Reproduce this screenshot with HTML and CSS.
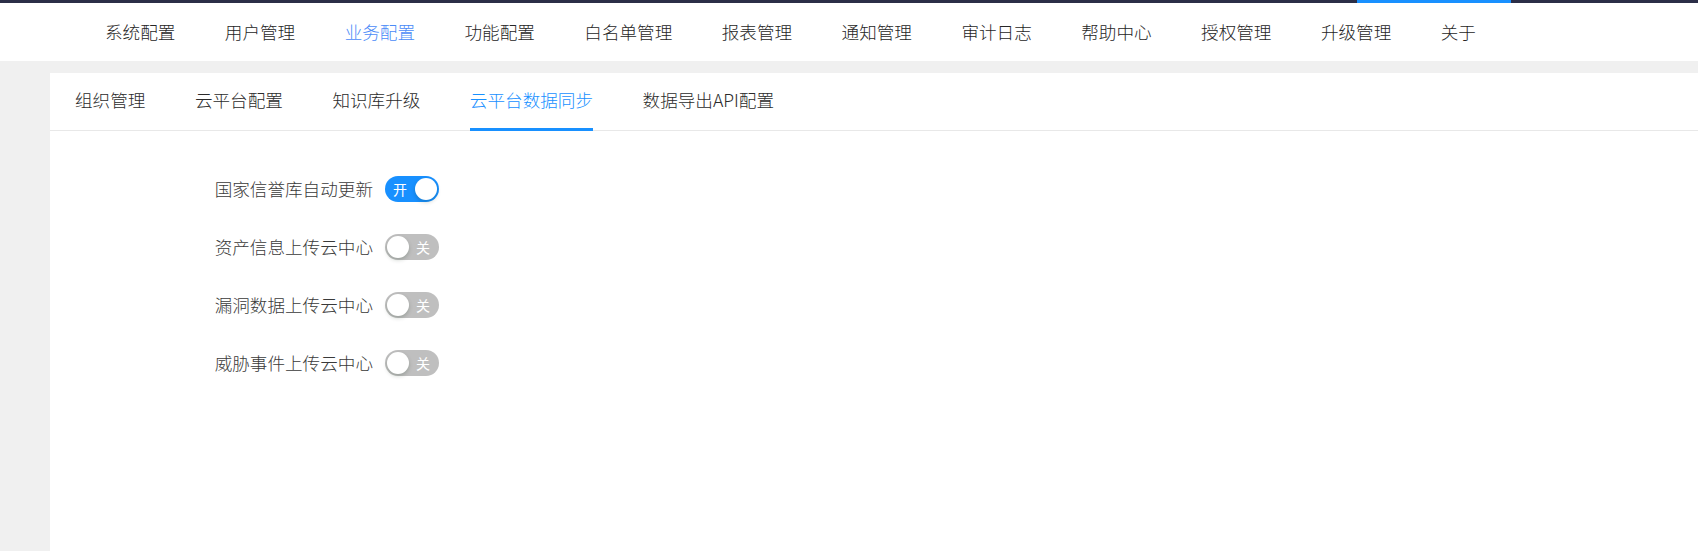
FILE: index.html
```html
<!DOCTYPE html>
<html lang="zh-CN">
<head>
<meta charset="utf-8">
<title>业务配置</title>
<link rel="stylesheet" href="styles.css">
</head>
<body>
<header class="topbar">
  <div class="topline"><span class="topline-active"></span></div>
  <nav class="mainnav">
    <a class="nav-item">系统配置</a>
    <a class="nav-item">用户管理</a>
    <a class="nav-item active">业务配置</a>
    <a class="nav-item">功能配置</a>
    <a class="nav-item">白名单管理</a>
    <a class="nav-item">报表管理</a>
    <a class="nav-item">通知管理</a>
    <a class="nav-item">审计日志</a>
    <a class="nav-item">帮助中心</a>
    <a class="nav-item">授权管理</a>
    <a class="nav-item">升级管理</a>
    <a class="nav-item">关于</a>
  </nav>
</header>
<main class="panel">
  <div class="tabs">
    <div class="tab">组织管理</div>
    <div class="tab">云平台配置</div>
    <div class="tab">知识库升级</div>
    <div class="tab active">云平台数据同步</div>
    <div class="tab">数据导出API配置</div>
  </div>
  <div class="form">
    <div class="row">
      <label class="label">国家信誉库自动更新</label>
      <span class="switch on"><span class="switch-text">开</span><span class="knob"></span></span>
    </div>
    <div class="row">
      <label class="label">资产信息上传云中心</label>
      <span class="switch off"><span class="knob"></span><span class="switch-text">关</span></span>
    </div>
    <div class="row">
      <label class="label">漏洞数据上传云中心</label>
      <span class="switch off"><span class="knob"></span><span class="switch-text">关</span></span>
    </div>
    <div class="row">
      <label class="label">威胁事件上传云中心</label>
      <span class="switch off"><span class="knob"></span><span class="switch-text">关</span></span>
    </div>
  </div>
</main>
</body>
</html>
```
FILE: styles.css
```css
* { box-sizing: border-box; }
html, body { height: 100%; }
body {
  margin: 0;
  background: #f0f0f0;
  font-family: "Noto Sans CJK SC", "Noto Sans", sans-serif;
  font-size: 17.6px;
  font-weight: 300;
  color: #333;
  display: flex;
  flex-direction: column;
}
.topbar { background: #fff; }
.topline {
  position: relative;
  height: 3px;
  background: #2b2e47;
}
.topline-active {
  position: absolute;
  left: 1357px;
  top: 0;
  width: 154px;
  height: 3px;
  background: #1890ff;
}
.mainnav {
  display: flex;
  gap: 49.45px;
  padding-left: 105px;
  height: 58px;
  align-items: center;
}
.nav-item {
  color: #262626;
  line-height: 24px;
  white-space: nowrap;
  cursor: pointer;
}
.nav-item.active { color: #4b8bf7; }
.panel {
  flex: 1;
  margin: 12px 0 0 50px;
  background: #fff;
}
.tabs {
  display: flex;
  gap: 49.5px;
  padding-left: 25px;
  border-bottom: 1px solid #e8e8e8;
}
.tab {
  padding-top: 15px;
  padding-bottom: 16px;
  line-height: 24px;
  border-bottom: 3px solid transparent;
  margin-bottom: -1px;
  color: #2b2b2b;
  white-space: nowrap;
  cursor: pointer;
}
.tab.active {
  color: #1890ff;
  border-bottom-color: #1890ff;
}
.form {
  display: flex;
  flex-direction: column;
  gap: 32px;
  padding-top: 45px;
  padding-left: 123px;
}
.row {
  display: flex;
  align-items: center;
  height: 26px;
}
.label {
  width: 200px;
  text-align: right;
  margin-right: 12px;
  color: #3a3a3a;
  line-height: 24px;
  white-space: nowrap;
}
.switch {
  display: inline-flex;
  align-items: center;
  justify-content: space-between;
  width: 54px;
  height: 26px;
  border-radius: 13px;
  padding: 2px;
}
.switch.on { background: #1890ff; }
.switch.off { background: #bfbfbf; }
.knob {
  width: 22px;
  height: 22px;
  border-radius: 50%;
  background: #fff;
  box-shadow: 0 2px 4px rgba(0, 35, 11, 0.2);
}
.switch-text {
  color: #fff;
  font-size: 14px;
  font-weight: 400;
  line-height: 22px;
}
.switch.on .switch-text { margin-left: 6px; }
.switch.off .switch-text { margin-right: 7px; }
```
